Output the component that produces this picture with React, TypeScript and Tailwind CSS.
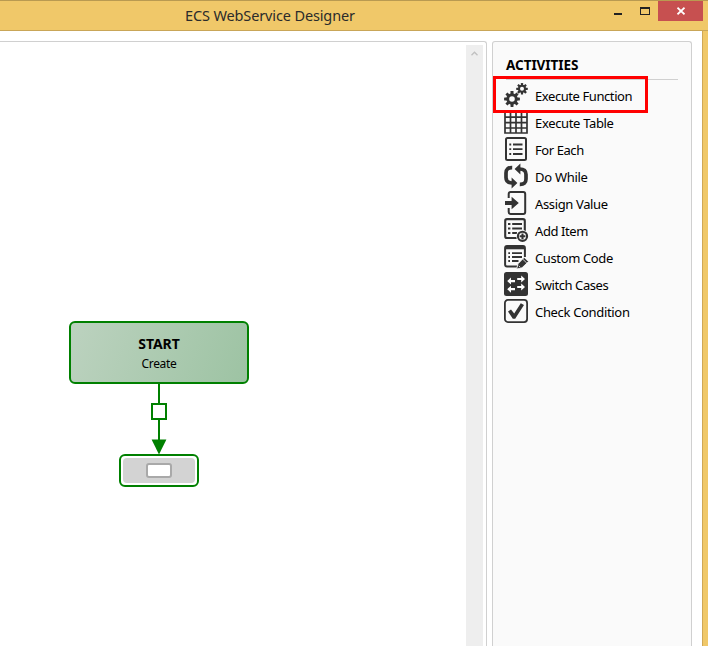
import type { ReactNode } from "react";

const INK = "#333333";
const PAPER = "#fafafa";

const gear = (cx: number, cy: number, body: number, tooth: number, w: number, hole: number) => (
  <g>
    {[0, 45, 90, 135].map((a) => (
      <rect key={a} x={cx - w / 2} y={cy - tooth} width={w} height={tooth * 2} rx={0.4} transform={`rotate(${a} ${cx} ${cy})`} fill={INK} />
    ))}
    <circle cx={cx} cy={cy} r={body} fill={INK} />
    <circle cx={cx} cy={cy} r={hole} fill={PAPER} />
  </g>
);

const icons: Record<string, ReactNode> = {
  gears: (
    <>
      {gear(8, 16, 5.7, 7.9, 3, 2.8)}
      {gear(18, 5.8, 4, 5.8, 2.2, 2)}
    </>
  ),
  table: (
    <path d="M1 1H23V23H1ZM1 7.2H23M1 12.6H23M1 18H23M6.5 1V23M12 1V23M17.5 1V23" fill="none" stroke={INK} strokeWidth="1.7" />
  ),
  list: (
    <>
      <rect x="2" y="1" width="20" height="22" rx="1.5" fill="none" stroke={INK} strokeWidth="2" />
      <path d="M5.3 7.5H7.2M5.3 12.2H7.2M5.3 17H7.2M9 7.5H18.5M9 12.2H18.5M9 17H18.5" stroke={INK} strokeWidth="1.8" />
    </>
  ),
  loop: (
    <>
      <path d="M8.2 3.6Q2 3.4 2 9V13.5Q2 19 8.4 19" fill="none" stroke={INK} strokeWidth="3.7" />
      <path d="M15.8 20.4Q22 20.6 22 15V10.5Q22 5 15.6 5" fill="none" stroke={INK} strokeWidth="3.7" />
      <path d="M7.6 13.6L13.4 19L7.6 24.4ZM16.4 -0.4L10.6 5L16.4 10.4Z" fill={INK} />
    </>
  ),
  assign: (
    <>
      <path d="M4.7 7V3Q4.7 1.1 6.6 1.1H19.3Q21.2 1.1 21.2 3V21Q21.2 22.9 19.3 22.9H6.6Q4.7 22.9 4.7 21V17" fill="none" stroke={INK} strokeWidth="2" />
      <path d="M1 10H7.6V5.8L14.8 12L7.6 18.2V14H1Z" fill={INK} />
    </>
  ),
  add: (
    <>
      <path d="M13 20H3Q1.2 20 1.2 18.2V2.9Q1.2 1.1 3 1.1H19Q20.8 1.1 20.8 2.9V14" fill="none" stroke={INK} strokeWidth="2.1" />
      <path d="M4 6H6.4M4 10.5H6.4M4 15H6.4M8.2 6H18M8.2 10.5H18M8.2 15H13" stroke={INK} strokeWidth="2.2" />
      <circle cx="18.5" cy="18.3" r="6.3" fill={PAPER} />
      <circle cx="18.5" cy="18.3" r="4.6" fill={PAPER} stroke={INK} strokeWidth="2.1" />
      <path d="M18.5 15.4V21.2M15.6 18.3H21.4" stroke={INK} strokeWidth="2.1" />
    </>
  ),
  edit: (
    <>
      <path d="M13 21.5H3Q1.1 21.5 1.1 19.5V3Q1.1 1.1 3 1.1H19Q20.9 1.1 20.9 3V12" fill="none" stroke={INK} strokeWidth="2" />
      <path d="M1 2.8H21" stroke={INK} strokeWidth="3" />
      <path d="M4.3 8.2H6M4.3 12H6M4.3 16H6M8 8.2H18M8 12H18M8 16H14.5" stroke={INK} strokeWidth="1.8" />
      <path d="M12.6 24L14 18.8L20.2 12.4L24.5 16.6L18 22.8Z" fill={INK} stroke={PAPER} strokeWidth="0.8" />
      <path d="M18.6 14L22.9 18.2M14.8 20.8L16.2 22.2" stroke={PAPER} strokeWidth="0.8" />
    </>
  ),
  swap: (
    <>
      <rect x="0" y="0" width="24" height="24" rx="2.5" fill={INK} />
      <path d="M3.2 9.1L7 5.6V8H11V10.2H7V12.6ZM21 7L17.2 3.5V5.9H13.2V8.1H17.2V10.5ZM3.2 17.2L7 13.7V16.1H11V18.3H7V20.7ZM21 15L17.2 11.5V13.9H13.2V16.1H17.2V18.5Z" fill="#fff" />
    </>
  ),
  check: (
    <>
      <rect x="0.9" y="0.9" width="22.2" height="22.2" rx="3" fill="none" stroke={INK} strokeWidth="1.8" />
      <path d="M4 12.4L7 10.5L10.2 14.5L16.8 4.2L20 5.9L11.2 19.7H8.8Z" fill={INK} />
    </>
  ),
};

const activities = [
  { icon: "gears", label: "Execute Function", tracking: "tracking-[-0.42px]" },
  { icon: "table", label: "Execute Table", tracking: "tracking-[-0.34px]" },
  { icon: "list", label: "For Each", tracking: "tracking-[-0.42px]" },
  { icon: "loop", label: "Do While", tracking: "tracking-[-0.28px]" },
  { icon: "assign", label: "Assign Value", tracking: "tracking-[-0.36px]" },
  { icon: "add", label: "Add Item", tracking: "tracking-[-0.42px]" },
  { icon: "edit", label: "Custom Code", tracking: "tracking-[-0.37px]" },
  { icon: "swap", label: "Switch Cases", tracking: "tracking-[-0.42px]" },
  { icon: "check", label: "Check Condition", tracking: "tracking-[-0.33px]" },
];

function TitleBar() {
  return (
    <header className="flex h-[31px] shrink-0 border-t border-b border-t-[#b99a51] border-b-[#c9a658] bg-[#f0c869]">
      <div className="w-[185px]" />
      <h1 className="flex-1 pt-[3px] text-[14.5px] leading-[22px] tracking-[-0.13px] whitespace-nowrap text-[#2b2b2b]">
        ECS WebService Designer
      </h1>
      <div className="flex">
        <div className="w-[26px] pt-[12px]"><div className="h-[2px] w-2 bg-[#222]" /></div>
        <div className="w-[18px] pt-[6px]"><div className="h-2 w-[10px] border border-t-2 border-[#222]" /></div>
        <div className="mr-[5px] flex h-5 w-[45px] items-center justify-center bg-[#c75050]">
          <svg width="8" height="8" viewBox="0 0 8 8"><path d="M0.5 0.7L7.5 7.3M7.5 0.7L0.5 7.3" stroke="#fff" strokeWidth="1.7" /></svg>
        </div>
      </div>
    </header>
  );
}

function Canvas() {
  return (
    <section className="relative flex w-[487px] justify-end rounded-tr-[3px] border-t border-r border-[#d0d0d0] bg-white pr-[3px] pt-[3px]">
      <div className="flex w-[17px] justify-center bg-[#eeeeee] pt-[6px]">
        <svg width="7" height="5" viewBox="0 0 7 5"><path d="M0.5 4.3L3.5 1.2L6.5 4.3" fill="none" stroke="#c0c0c0" strokeWidth="1.3" /></svg>
      </div>
      <div className="absolute top-[279px] left-[69px] flex h-[63px] w-[180px] flex-col items-center rounded-[6px] border-2 border-[#008000] bg-linear-[110deg,#bcd2bf,#9dc3a3] pt-[11px] text-black">
        <strong className="text-[14px] leading-[20px] font-bold tracking-[-0.1px]">START</strong>
        <span className="text-[12px] leading-[19px] tracking-[-0.3px]">Create</span>
      </div>
      <div className="absolute top-[342px] left-[158px] h-[62px] w-[2px] bg-[#008000]" />
      <div className="absolute top-[361px] left-[151px] h-[17px] w-4 border-2 border-[#008000] bg-white" />
      <svg className="absolute top-[397px] left-[151px]" width="16" height="16" viewBox="0 0 16 16"><path d="M0.6 0.5H15.4L8 15.5Z" fill="#008000" /></svg>
      <div className="absolute top-[412px] left-[119px] flex h-[33px] w-20 rounded-[6px] border-2 border-[#008000] bg-white p-[2px]">
        <div className="flex flex-1 items-center justify-center rounded-[4px] bg-[#d3d3d3]">
          <div className="h-[15px] w-[26px] rounded-[3px] border-2 border-[#a9a9a9] bg-white" />
        </div>
      </div>
    </section>
  );
}

function Activities() {
  return (
    <aside className="relative ml-[5px] w-[200px] rounded-t-[3px] border border-b-0 border-[#d0d0d0] bg-[#fafafa] pl-[11px]">
      <h2 className="ml-[2px] flex h-[38px] w-[172px] items-end border-b border-[#d0d0d0] pb-[4px] text-[13.5px] leading-[20px] font-bold text-black">
        <span className="tracking-[-0.05px]">ACTIVITIES</span>
      </h2>
      <ul className="mt-[3px] flex flex-col gap-[3px]">
        {activities.map((a) => (
          <li key={a.label} className="flex h-6 items-center gap-[7px]">
            <svg className="shrink-0 overflow-visible" width="24" height="24" viewBox="0 0 24 24">{icons[a.icon]}</svg>
            <span className={`pt-[2px] text-[13px] leading-5 whitespace-nowrap text-black ${a.tracking}`}>{a.label}</span>
          </li>
        ))}
      </ul>
      <div className="absolute top-[34px] left-0 h-[37px] w-[155px] border-3 border-[#ff0000]" />
    </aside>
  );
}

export default function App() {
  return (
    <div className="flex h-[646px] w-[708px] flex-col overflow-hidden bg-white font-['Noto_Sans','Open_Sans',sans-serif]">
      <TitleBar />
      <main className="flex min-h-0 flex-1 border-r-[5px] border-[#f0c869]">
        <div className="flex flex-1 border-r border-[#d0a856] pt-[10px]">
          <Canvas />
          <Activities />
        </div>
      </main>
    </div>
  );
}
